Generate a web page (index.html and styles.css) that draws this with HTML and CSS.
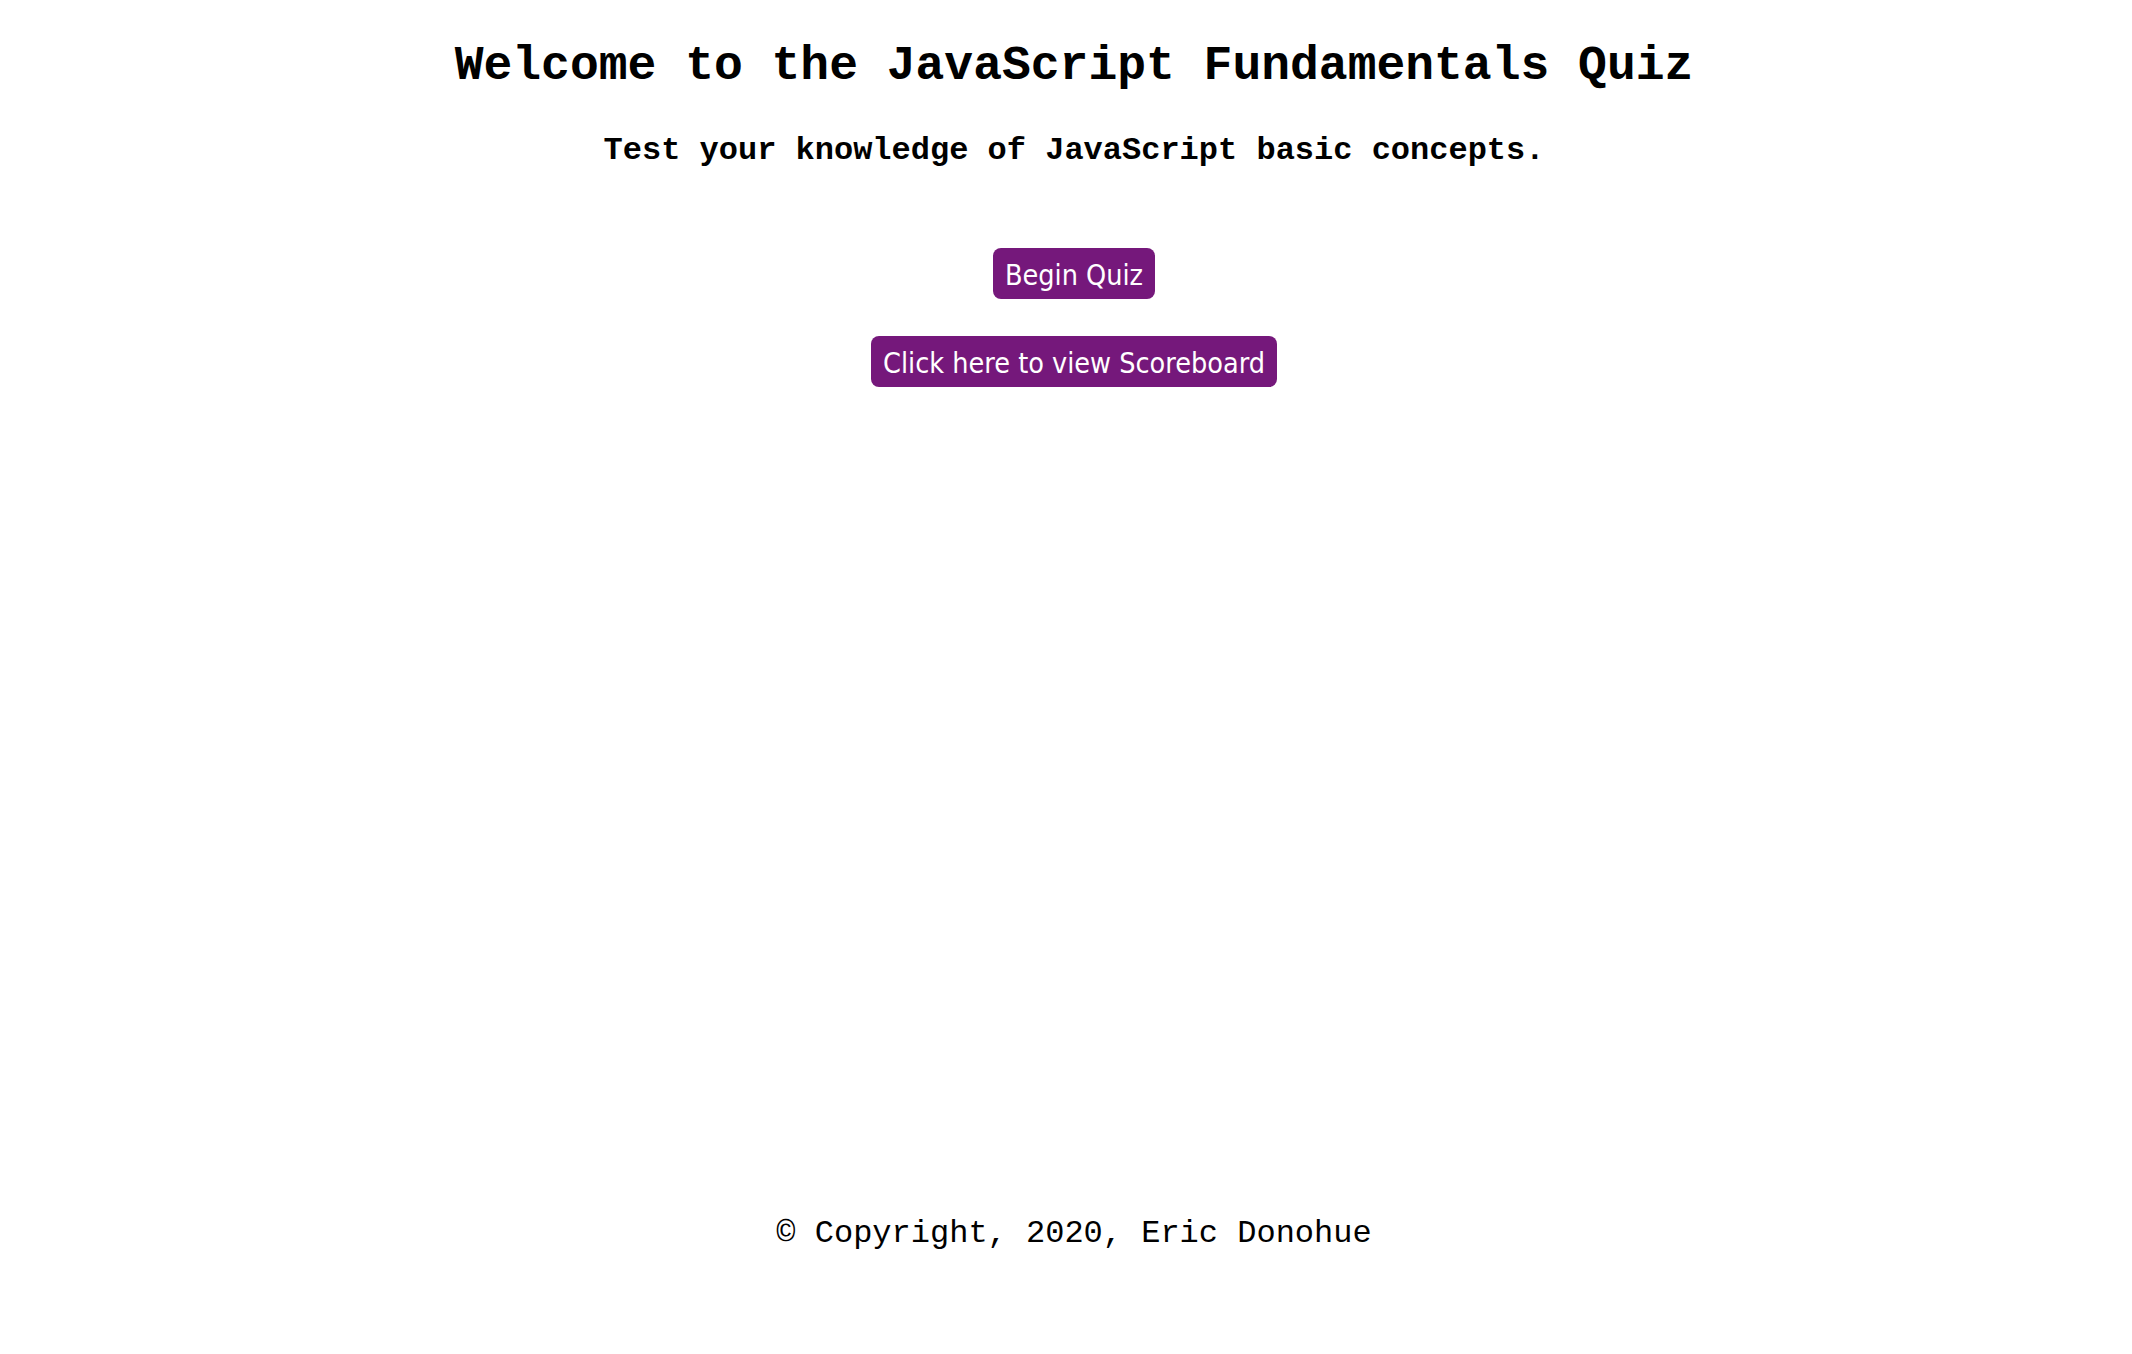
FILE: index.html
```html
<!DOCTYPE html>
<html lang="en">
<head>
<meta charset="utf-8">
<title>JavaScript Fundamentals Quiz</title>
<link rel="stylesheet" href="styles.css">
</head>
<body>
  <main class="intro">
    <h1 class="title">Welcome to the JavaScript Fundamentals Quiz</h1>
    <h2 class="subtitle">Test your knowledge of JavaScript basic concepts.</h2>
    <button class="btn btn-start" type="button">Begin Quiz</button>
    <button class="btn btn-scores" type="button">Click here to view Scoreboard</button>
  </main>
  <footer class="footer">© Copyright, 2020, Eric Donohue</footer>
</body>
</html>
```

FILE: styles.css
```css
html, body {
  height: 100%;
}

body {
  margin: 0;
  padding: 0 0 0 16px;
  box-sizing: border-box;
  min-height: 100vh;
  display: flex;
  flex-direction: column;
  align-items: center;
  background: #ffffff;
  color: #000000;
  font-family: "Liberation Mono", "Courier New", monospace;
}

.intro {
  display: flex;
  flex-direction: column;
  align-items: center;
}

.title {
  margin: 39px 0 0;
  font-size: 48px;
  line-height: 54px;
  font-weight: bold;
  white-space: nowrap;
}

.subtitle {
  margin: 40px 0 0;
  font-size: 32px;
  line-height: 36px;
  font-weight: bold;
  white-space: nowrap;
}

.btn {
  display: block;
  margin: 0;
  border: none;
  border-radius: 8px;
  background: #75187b;
  color: #ffffff;
  font-family: "DejaVu Sans Condensed", "DejaVu Sans", Verdana, sans-serif;
  font-stretch: condensed;
  font-size: 28.5px;
  line-height: 36px;
  padding: 10px 12px 5px;
  white-space: nowrap;
  cursor: pointer;
}

.btn-start {
  margin-top: 79px;
}

.btn-scores {
  margin-top: 37px;
}

.footer {
  margin-top: auto;
  margin-bottom: 102px;
  font-size: 32px;
  line-height: 36px;
  font-weight: normal;
  white-space: nowrap;
}
```
